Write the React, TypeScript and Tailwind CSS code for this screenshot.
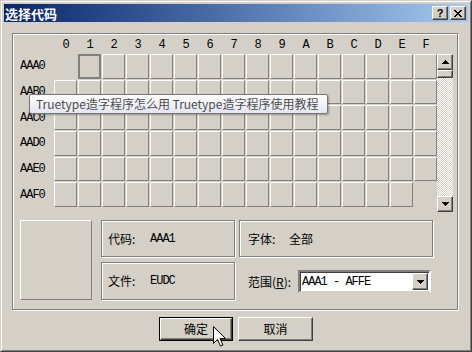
const HEX = ['0', '1', '2', '3', '4', '5', '6', '7', '8', '9', 'A', 'B', 'C', 'D', 'E', 'F'];
const ROWS = ['AAA0', 'AAB0', 'AAC0', 'AAD0', 'AAE0', 'AAF0'];

const raised = 'border border-t-white border-l-white border-r-[#404040] border-b-[#404040] shadow-[inset_-1px_-1px_0_#808080]';
const etched = 'border border-[#808080] shadow-[inset_1px_1px_0_#fff,1px_1px_0_#fff]';
const mono = "font-['Liberation_Mono',monospace] text-[12px] tracking-[-1px]";
const cjk = "font-['Noto_Sans_CJK_SC',sans-serif] text-[12px]";

function Cell({ row, col }: { row: number; col: number }) {
  if ((row === 0 && col === 0) || (row === 5 && col === 15)) return <div />;
  if (row === 0 && col === 1) return <div className="border-2 border-[#808080]" />;
  return <div className="border border-t-white border-l-white border-r-[#808080] border-b-[#808080]" />;
}

function Arrow({ up }: { up?: boolean }) {
  return (
    <svg width="7" height="4" viewBox="0 0 7 4" shapeRendering="crispEdges">
      <polygon points={up ? '0,4 3.5,0 7,4' : '0,0 7,0 3.5,4'} fill="#000" />
    </svg>
  );
}

function Scrollbar() {
  return (
    <div className="w-[16px] h-[158px] flex flex-col">
      <div className={`h-[16px] flex items-center justify-center bg-[#d4d0c8] ${raised}`}>
        <Arrow up />
      </div>
      <div className={`h-[8px] bg-[#d4d0c8] ${raised}`} />
      <div className="flex-1 bg-[image:repeating-conic-gradient(#ffffff_0%_25%,#d4d0c8_0%_50%)] bg-[length:2px_2px]" />
      <div className={`h-[16px] flex items-center justify-center bg-[#d4d0c8] ${raised}`}>
        <Arrow />
      </div>
    </div>
  );
}

export default function App() {
  return (
    <div className="relative w-[472px] h-[352px] bg-[#d4d0c8] border border-t-[#d4d0c8] border-l-[#d4d0c8] border-r-[#404040] border-b-[#404040] text-black select-none">
      <div className="h-full border border-t-white border-l-white border-r-[#808080] border-b-[#808080] p-[2px] flex flex-col">
        {/* title bar */}
        <div className="h-[18px] flex items-center justify-between bg-linear-to-r from-[#0a246a] to-[#a6caf0] pl-[1px] pr-[2px]">
          <span className="font-['Noto_Sans_CJK_SC',sans-serif] text-[13px] font-bold text-white leading-none">选择代码</span>
          <div className="flex gap-[2px]">
            <div className={`w-[16px] h-[14px] bg-[#d4d0c8] flex items-center justify-center ${raised}`}>
              <span className="font-['Liberation_Sans',sans-serif] text-[11px] font-bold leading-none">?</span>
            </div>
            <div className={`w-[16px] h-[14px] bg-[#d4d0c8] flex items-center justify-center ${raised}`}>
              <svg width="8" height="7" viewBox="0 0 8 7" shapeRendering="crispEdges">
                <path d="M0 0h2v1h-2zM6 0h2v1h-2zM1 1h2v1h-2zM5 1h2v1h-2zM2 2h4v1h-4zM3 3h2v1h-2zM2 4h4v1h-4zM1 5h2v1h-2zM5 5h2v1h-2zM0 6h2v1h-2zM6 6h2v1h-2z" fill="#000" />
              </svg>
            </div>
          </div>
        </div>

        {/* code panel */}
        <div className={`mt-[11px] ml-[8px] w-[446px] h-[277px] ${etched}`}>
          <div className="pt-[5px] pl-[7px]">
            <div className="flex h-[15px]">
              <div className="w-[34px]" />
              <div className={`w-[383px] grid grid-cols-16 gap-px ${mono}`}>
                {HEX.map(h => (
                  <div key={h} className="text-center leading-[13px]">{h}</div>
                ))}
              </div>
            </div>

            <div className="flex">
              <div className={`w-[34px] h-[153px] grid grid-rows-6 gap-px ${mono}`}>
                {ROWS.map(r => (
                  <div key={r} className="flex items-center">{r}</div>
                ))}
              </div>
              <div className="w-[383px] h-[153px] grid grid-cols-16 grid-rows-6 gap-px">
                {ROWS.map((r, ri) => HEX.map((h, ci) => <Cell key={r + h} row={ri} col={ci} />))}
              </div>
              <Scrollbar />
            </div>

            <div className="flex mt-[8px]">
              <div className="w-[72px] h-[80px] border border-t-white border-l-white border-r-[#808080] border-b-[#808080]" />
              <div className="ml-[9px] w-[134px] flex flex-col">
                <div className={`h-[37px] flex items-center pl-[6px] ${etched}`}>
                  <span className={`w-[42px] ${cjk}`}>代码:</span>
                  <span className={mono}>AAA1</span>
                </div>
                <div className={`mt-[5px] h-[38px] flex items-center pl-[6px] ${etched}`}>
                  <span className={`w-[42px] ${cjk}`}>文件:</span>
                  <span className={mono}>EUDC</span>
                </div>
              </div>
              <div className="ml-[4px] w-[194px] flex flex-col">
                <div className={`h-[37px] flex items-center pl-[8px] ${etched}`}>
                  <span className={`w-[41px] ${cjk}`}>字体:</span>
                  <span className={cjk}>全部</span>
                </div>
                <div className="mt-[13px] h-[23px] flex items-center pl-[9px]">
                  <span className={`w-[50px] ${cjk}`}>
                    范围(<span className="underline">R</span>):
                  </span>
                  <div className="w-[133px] h-[23px] bg-white border-2 border-t-[#808080] border-l-[#808080] border-r-white border-b-[#d4d0c8] shadow-[inset_1px_1px_0_#404040] flex items-center">
                    <span className={`flex-1 pl-[2px] whitespace-pre ${mono}`}>AAA1 - AFFE</span>
                    <div className={`w-[16px] h-[17px] mr-px bg-[#d4d0c8] flex items-center justify-center ${raised}`}>
                      <Arrow />
                    </div>
                  </div>
                </div>
              </div>
            </div>
          </div>
        </div>

        {/* buttons */}
        <div className="mt-[7px] flex justify-center gap-[5px]">
          <div className="w-[74px] h-[24px] border border-black">
            <div className={`h-full flex items-center justify-center bg-[#d4d0c8] ${raised} ${cjk}`}>确定</div>
          </div>
          <div className={`w-[75px] h-[24px] flex items-center justify-center bg-[#d4d0c8] ${raised} ${cjk}`}>取消</div>
        </div>
      </div>

      {/* tooltip */}
      <div className="absolute left-[28px] top-[93px] w-[299px] h-[20px] rounded-[2px] border border-[#767676] bg-linear-to-b from-white to-[#e4e5f0] shadow-[1px_1px_2px_rgba(0,0,0,0.3)] flex items-center pl-[6px]">
        <span className="font-['Noto_Sans_CJK_SC',sans-serif] text-[12px] leading-none text-[#4c4c4c] whitespace-nowrap">
          Truetype造字程序怎么用 Truetype造字程序使用教程
        </span>
      </div>

      {/* mouse cursor */}
      <svg className="absolute left-[212px] top-[325px]" width="13" height="21" viewBox="0 0 13 21">
        <path d="M0.5 0.5 L0.5 17.5 L4.5 13.5 L7.5 20 L10 19 L7 12.5 L12.5 12.5 Z" fill="#fff" stroke="#000" strokeWidth="1" />
      </svg>
    </div>
  );
}
